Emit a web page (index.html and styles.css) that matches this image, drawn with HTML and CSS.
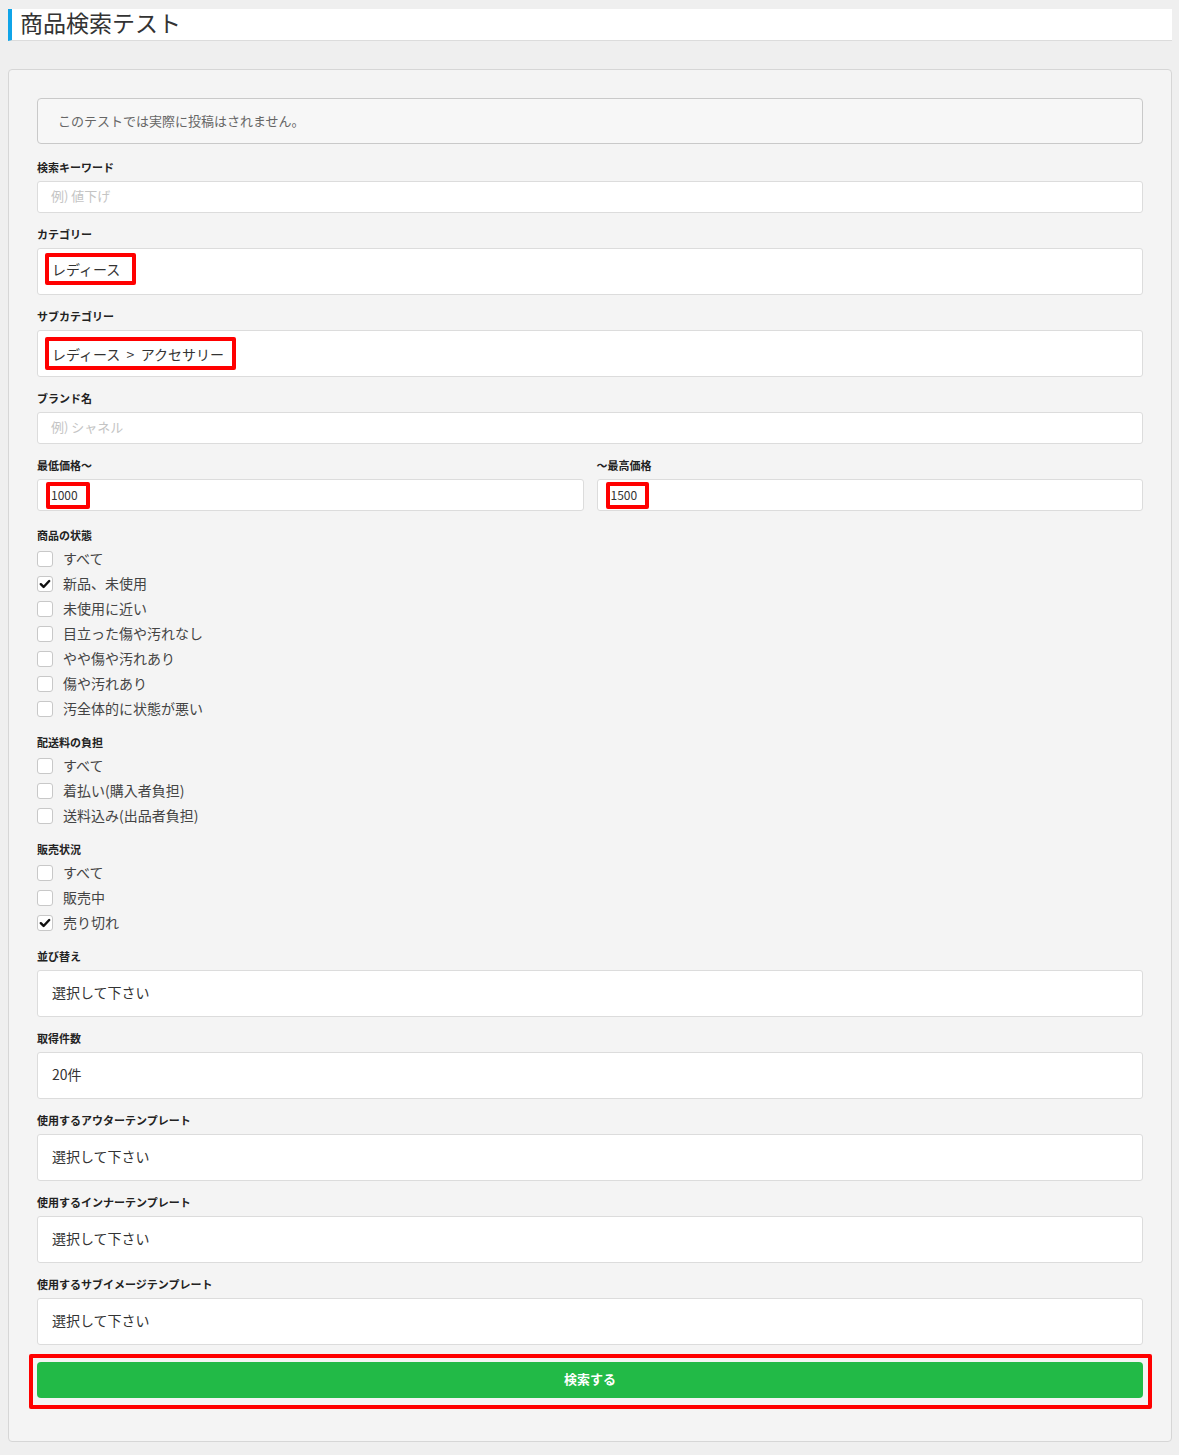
FILE: index.html
```html
<!DOCTYPE html>
<html lang="ja">
<head>
<meta charset="utf-8">
<title>商品検索テスト</title>
<link rel="stylesheet" href="styles.css">
</head>
<body>
<div class="page-title"><h1>商品検索テスト</h1></div>

<div class="panel">
  <div class="notice">このテストでは実際に投稿はされません。</div>

  <div class="group">
    <div class="label">検索キーワード</div>
    <div class="input placeholder">例) 値下げ</div>
  </div>

  <div class="group">
    <div class="label">カテゴリー</div>
    <div class="select"><span class="mark mark-cat">レディース</span></div>
  </div>

  <div class="group">
    <div class="label">サブカテゴリー</div>
    <div class="select"><span class="mark mark-sub">レディース&nbsp;&nbsp;&gt;&nbsp;&nbsp;アクセサリー</span></div>
  </div>

  <div class="group">
    <div class="label">ブランド名</div>
    <div class="input placeholder">例) シャネル</div>
  </div>

  <div class="group price-row">
    <div class="price-col">
      <div class="label">最低価格～</div>
      <div class="input"><span class="mark mark-num">1000</span></div>
    </div>
    <div class="price-col">
      <div class="label">～最高価格</div>
      <div class="input"><span class="mark mark-num">1500</span></div>
    </div>
  </div>

  <div class="group">
    <div class="label label-cb">商品の状態</div>
    <div class="cb-row"><span class="cb"></span><span class="cb-text">すべて</span></div>
    <div class="cb-row"><span class="cb checked"><svg viewBox="0 0 16 16" width="14" height="14"><path d="M3.2 8.2 L6.4 11.4 L12.8 4.6" fill="none" stroke="#111" stroke-width="2.8" stroke-linecap="round" stroke-linejoin="round"/></svg></span><span class="cb-text">新品、未使用</span></div>
    <div class="cb-row"><span class="cb"></span><span class="cb-text">未使用に近い</span></div>
    <div class="cb-row"><span class="cb"></span><span class="cb-text">目立った傷や汚れなし</span></div>
    <div class="cb-row"><span class="cb"></span><span class="cb-text">やや傷や汚れあり</span></div>
    <div class="cb-row"><span class="cb"></span><span class="cb-text">傷や汚れあり</span></div>
    <div class="cb-row"><span class="cb"></span><span class="cb-text">汚全体的に状態が悪い</span></div>
  </div>

  <div class="group">
    <div class="label label-cb">配送料の負担</div>
    <div class="cb-row"><span class="cb"></span><span class="cb-text">すべて</span></div>
    <div class="cb-row"><span class="cb"></span><span class="cb-text">着払い(購入者負担)</span></div>
    <div class="cb-row"><span class="cb"></span><span class="cb-text">送料込み(出品者負担)</span></div>
  </div>

  <div class="group">
    <div class="label label-cb">販売状況</div>
    <div class="cb-row"><span class="cb"></span><span class="cb-text">すべて</span></div>
    <div class="cb-row"><span class="cb"></span><span class="cb-text">販売中</span></div>
    <div class="cb-row"><span class="cb checked"><svg viewBox="0 0 16 16" width="14" height="14"><path d="M3.2 8.2 L6.4 11.4 L12.8 4.6" fill="none" stroke="#111" stroke-width="2.8" stroke-linecap="round" stroke-linejoin="round"/></svg></span><span class="cb-text">売り切れ</span></div>
  </div>

  <div class="group">
    <div class="label">並び替え</div>
    <div class="select">選択して下さい</div>
  </div>

  <div class="group">
    <div class="label">取得件数</div>
    <div class="select">20件</div>
  </div>

  <div class="group">
    <div class="label">使用するアウターテンプレート</div>
    <div class="select">選択して下さい</div>
  </div>

  <div class="group">
    <div class="label">使用するインナーテンプレート</div>
    <div class="select">選択して下さい</div>
  </div>

  <div class="group last">
    <div class="label">使用するサブイメージテンプレート</div>
    <div class="select">選択して下さい</div>
  </div>

  <div class="btn-mark">
    <div class="btn">検索する</div>
  </div>
</div>
</body>
</html>
```

FILE: styles.css
```css
html, body {
  margin: 0;
  padding: 0;
}
body {
  background: #efefef;
  padding: 9px 7px 13px 8px;
  font-family: "Noto Sans CJK JP", "Noto Sans", "Liberation Sans", sans-serif;
  color: #333;
}
.page-title {
  background: #fff;
  border-left: 4px solid #10a4e8;
  border-bottom: 1px solid #dcdcdc;
  height: 26px;
  padding: 0 0 5px 8px;
  display: flex;
  align-items: center;
}
.page-title h1 {
  margin: 0;
  font-size: 23px;
  font-weight: 400;
  line-height: 26px;
  color: #333;
}
.panel {
  margin-top: 28px;
  background: #f4f4f4;
  border: 1px solid #d6d6d6;
  border-radius: 4px;
  padding: 28px 28px 32px 28px;
}
.notice {
  height: 46px;
  box-sizing: border-box;
  background: #f7f7f7;
  border: 1px solid #c9c9c9;
  border-radius: 4px;
  padding: 0 0 2px 20px;
  display: flex;
  align-items: center;
  font-size: 13px;
  color: #666;
  margin-bottom: 16px;
}
.group {
  margin-bottom: 14px;
}
.group.last {
  margin-bottom: 9px;
}
.label {
  font-size: 11px;
  font-weight: 700;
  line-height: 14px;
  color: #222;
  margin-bottom: 7px;
}
.label-cb {
  margin-bottom: 4px;
}
.input {
  box-sizing: border-box;
  height: 32px;
  background: #fff;
  border: 1px solid #dcdcdc;
  border-radius: 3px;
  padding: 0 12px 3px 13px;
  display: flex;
  align-items: center;
  font-size: 13px;
  color: #333;
}
.input.placeholder {
  color: #c4c4c4;
}
.price-col .input {
  padding-bottom: 0;
}
.select {
  box-sizing: border-box;
  height: 47px;
  background: #fff;
  border: 1px solid #dcdcdc;
  border-radius: 3px;
  padding: 0 14px 4px 14px;
  display: flex;
  align-items: center;
  font-size: 14px;
  color: #333;
}
.mark {
  display: inline-block;
  border: 4px solid #ff0000;
  border-radius: 2px;
}
.mark-cat {
  line-height: 18px;
  padding: 3px 12px 3px 3px;
  margin-left: -7px;
  margin-bottom: 2px;
}
.mark-sub {
  line-height: 18px;
  padding: 4px 8px 3px 3px;
  margin-left: -7px;
  margin-top: 4px;
}
.mark-num {
  font-size: 12px;
  line-height: 15px;
  padding: 1px 8px 3px 1px;
  margin-left: -5px;
}
.price-row {
  display: grid;
  grid-template-columns: 1fr 1fr;
  column-gap: 13px;
  margin-bottom: 17px;
}
.cb-row {
  height: 25px;
  display: flex;
  align-items: center;
}
.cb {
  box-sizing: border-box;
  width: 16px;
  height: 16px;
  background: #fff;
  border: 1px solid #c8c8c8;
  border-radius: 3px;
  display: flex;
  align-items: center;
  justify-content: center;
}
.cb-text {
  margin-left: 10px;
  font-size: 14px;
  color: #444;
  line-height: 18px;
  padding-bottom: 1px;
}
.btn-mark {
  margin: 0 -9px 0 -8px;
  border: 4px solid #ff0000;
  padding: 4px 5px 7px 4px;
  border-radius: 2px;
}
.btn {
  height: 36px;
  box-sizing: border-box;
  padding-bottom: 3px;
  background: #22ba47;
  border-radius: 4px;
  color: #fff;
  font-size: 13px;
  font-weight: 700;
  display: flex;
  align-items: center;
  justify-content: center;
}
```
